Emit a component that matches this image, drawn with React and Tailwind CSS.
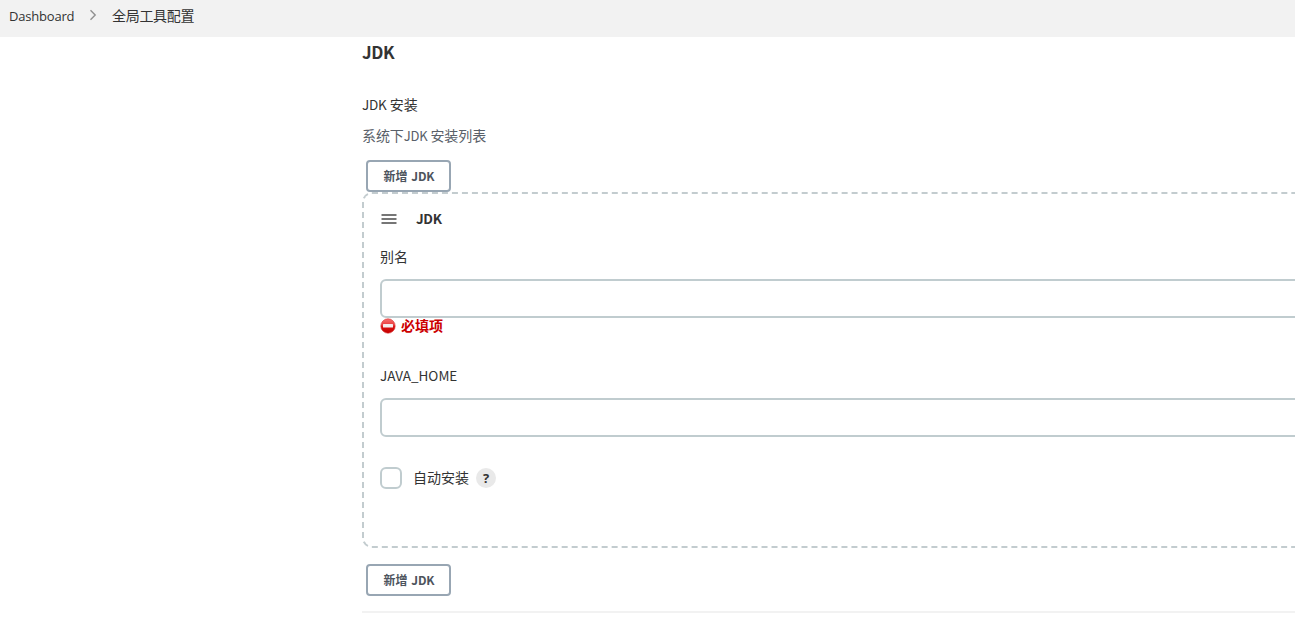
function AddButton() {
  return (
    <button className="ml-1 block h-8 w-[85px] rounded-[4px] border-2 border-[#98a6b3] bg-white pl-px text-center text-[12px] leading-[28px] font-semibold whitespace-nowrap text-[#4d545d]">
      新增 <span className="ml-px tracking-[-0.2px]">JDK</span>
    </button>
  );
}

function TextInput() {
  return (
    <input
      type="text"
      className="block h-[39px] w-full rounded-[6px] border-2 border-[#c0cccf] bg-white px-2 outline-none"
    />
  );
}

function ErrorIcon() {
  return (
    <svg width="16" height="16" viewBox="0 0 16 16" className="shrink-0">
      <defs>
        <linearGradient id="errorFill" x1="0" y1="0" x2="0" y2="1">
          <stop offset="0" stopColor="#f87070" />
          <stop offset="0.45" stopColor="#e93a3a" />
          <stop offset="0.55" stopColor="#d81010" />
          <stop offset="1" stopColor="#c40000" />
        </linearGradient>
      </defs>
      <circle cx="8" cy="8" r="7.2" fill="url(#errorFill)" stroke="#d93030" strokeWidth="0.6" />
      <rect x="3" y="6" width="10" height="3.5" rx="0.5" fill="#f4eeee" />
    </svg>
  );
}

export default function App() {
  return (
    <div className="h-[627px] w-full overflow-hidden bg-white font-['Noto_Sans_CJK_SC',sans-serif] text-[14px] text-[#333333]">
      <nav className="flex h-[37px] items-start bg-[#f2f2f2] pl-[9px]">
        <span className="w-[65px] font-['Open_Sans',sans-serif] text-[13px] leading-8 tracking-[-0.2px] whitespace-nowrap">Dashboard</span>
        <svg width="8" height="12" viewBox="0 0 8 12" className="mt-[9px] ml-[15px]" fill="none">
          <path d="M1.5 1.3 6.2 6 1.5 10.7" stroke="#909090" strokeWidth="1.4" />
        </svg>
        <span className="ml-[15px] leading-[30px] tracking-[-0.3px]">全局工具配置</span>
      </nav>
      <main className="ml-[362px] w-[1000px]">
        <h2 className="h-8 text-[17px] leading-[29px] font-bold tracking-[-0.4px]">JDK</h2>
        <div className="mt-[26px] h-5 leading-[18px]">
          <span className="text-[13.5px] tracking-[-0.2px]">JDK</span> 安装
        </div>
        <p className="mt-[11px] h-5 leading-[18px] tracking-[-0.1px] text-[#596069]">
          系统下<span className="text-[13px] tracking-[-0.2px]">JDK</span> 安装列表
        </p>
        <div className="h-[14px]" />
        <AddButton />
        <section className="h-[356px] rounded-[10px] border-2 border-dashed border-[#c3cccf] px-4">
          <div className="mt-[15px] flex h-5 items-center">
            <svg width="18" height="14" viewBox="0 0 18 14">
              <path d="M1.5 3h15M1.5 7h15M1.5 11h15" stroke="#4a4a4a" strokeWidth="1.4" />
            </svg>
            <span className="ml-[18px] h-5 text-[13.5px] leading-[18px] font-bold tracking-[-0.3px]">JDK</span>
          </div>
          <div className="mt-[18px] mb-[12px] h-5 leading-[18px]">别名</div>
          <TextInput />
          <div className="flex h-4 gap-[5px] font-semibold text-[#cc0000]">
            <ErrorIcon />
            <span className="leading-[14px]">必填项</span>
          </div>
          <div className="mt-8 mb-[12px] h-5 text-[13.5px] leading-[18px]">JAVA_HOME</div>
          <TextInput />
          <div className="mt-[30px] flex h-[22px] items-center">
            <span className="size-[22px] rounded-[6px] border-2 border-[#c0cccf] bg-white" />
            <span className="ml-[11px] h-[22px] leading-5">自动安装</span>
            <span className="ml-[7px] size-5 rounded-full bg-[#e9e9e9] text-center font-['Open_Sans',sans-serif] text-[13px] leading-5 font-bold">?</span>
          </div>
        </section>
        <div className="mt-4">
          <AddButton />
        </div>
        <hr className="mt-[15px] border-t-2 border-[#f2f2f2]" />
      </main>
    </div>
  );
}
